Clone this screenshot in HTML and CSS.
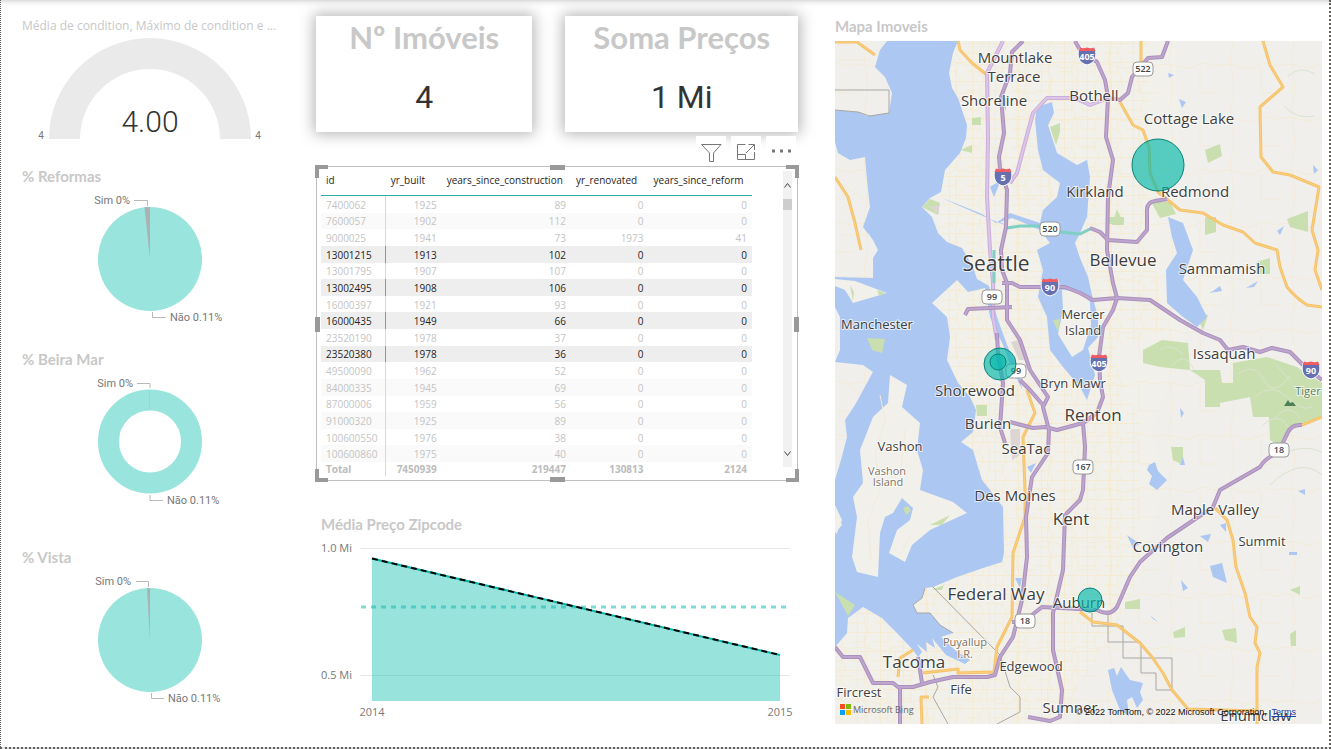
FILE: index.html
```html
<!DOCTYPE html>
<html lang="pt">
<head>
<meta charset="utf-8">
<meta name="viewport" content="width=device-width, initial-scale=1">
<title>Imóveis</title>
<link rel="stylesheet" href="styles.css">
</head>
<body>
<main class="report">
  <div class="column indicators">
    <section class="visual gauge">
      <h2 class="title title-plain">Média de condition, Máximo de condition e ...</h2>
      <svg class="chart" viewBox="22 36 257 130" role="img" aria-label="4.00">
        <path class="gauge-arc" d="M49 139A101 101 0 0 1 251 139H220A70 70 0 0 0 80 139Z"/>
        <text class="gauge-value" x="150" y="132">4.00</text>
        <text class="gauge-limit" x="41" y="139">4</text>
        <text class="gauge-limit" x="258" y="139">4</text>
      </svg>
    </section>
    <section class="visual">
      <h2 class="title">% Reformas</h2>
      <svg class="chart" viewBox="22 186 257 163" role="img" aria-label="Reformas">
        <circle class="slice-no" cx="150" cy="259" r="52"/>
        <path class="slice-yes" d="M150 259L144.500 207.300Q147 207 150 207Z"/>
        <path class="leader" d="M134 200.500H147.500V206M152.500 312V317.500H166"/>
        <text class="pie-label end" x="130" y="204">Sim 0%</text>
        <text class="pie-label" x="170" y="321">Não 0.11%</text>
      </svg>
    </section>
    <section class="visual">
      <h2 class="title">% Beira Mar</h2>
      <svg class="chart" viewBox="22 369 257 178" role="img" aria-label="Beira Mar">
        <circle class="ring" cx="150" cy="441.500" r="41.500"/>
        <path class="leader thin" d="M149.500 390V410"/>
        <path class="leader" d="M137 383.500H150V388M150 495V500.500H163"/>
        <text class="pie-label end" x="133" y="387">Sim 0%</text>
        <text class="pie-label" x="167" y="504">Não 0.11%</text>
      </svg>
    </section>
    <section class="visual">
      <h2 class="title">% Vista</h2>
      <svg class="chart" viewBox="22 567 257 163" role="img" aria-label="Vista">
        <circle class="slice-no" cx="150" cy="640" r="52"/>
        <path class="slice-yes" d="M150 640L147 588.100L150 588Z"/>
        <path class="leader" d="M136 581.500H148.500V587M151.500 693V698.500H164"/>
        <text class="pie-label end" x="131" y="585">Sim 0%</text>
        <text class="pie-label" x="168" y="702">Não 0.11%</text>
      </svg>
    </section>
  </div>

  <div class="column details">
    <div class="cards">
      <section class="card"><h2 class="card-title">Nº Imóveis</h2><p class="card-value">4</p></section>
      <section class="card"><h2 class="card-title">Soma Preços</h2><p class="card-value">1 Mi</p></section>
    </div>
    <div class="toolbar">
      <button class="tool" type="button" aria-label="Filtros"><svg viewBox="0 0 30 30"><path d="M5.500 8.500H25L17.500 17V25.500H13.500V17Z"/></svg></button>
      <button class="tool" type="button" aria-label="Modo de foco"><svg viewBox="0 0 30 30"><path d="M14.500 8.500H6.500V23.500H23.500V16M6.500 18.500H14.500V23.500M15 17L23 9M17.500 8.500H23.500V14"/></svg></button>
      <button class="tool" type="button" aria-label="Mais opções"><svg viewBox="0 0 30 30"><path class="dots" d="M6 13.500h3v3h-3zM14 13.500h3v3h-3zM22 13.500h3v3h-3z"/></svg></button>
    </div>
    <section class="table-frame">
      <i class="grip corner nw"></i><i class="grip corner ne"></i><i class="grip corner sw"></i><i class="grip corner se"></i>
      <i class="grip flat n"></i><i class="grip flat s"></i><i class="grip tall w"></i><i class="grip tall e"></i>
      <table class="data">
        <colgroup><col class="c-id"><col class="c-built"><col class="c-age"><col class="c-renovated"><col class="c-reform"></colgroup>
        <thead><tr><th>id</th><th>yr_built</th><th>years_since_construction</th><th>yr_renovated</th><th>years_since_reform</th></tr></thead>
        <tbody>
          <tr><td>7400062</td><td>1925</td><td>89</td><td>0</td><td>0</td></tr>
          <tr><td>7600057</td><td>1902</td><td>112</td><td>0</td><td>0</td></tr>
          <tr><td>9000025</td><td>1941</td><td>73</td><td>1973</td><td>41</td></tr>
          <tr class="selected"><td>13001215</td><td>1913</td><td>102</td><td>0</td><td>0</td></tr>
          <tr><td>13001795</td><td>1907</td><td>107</td><td>0</td><td>0</td></tr>
          <tr class="selected"><td>13002495</td><td>1908</td><td>106</td><td>0</td><td>0</td></tr>
          <tr><td>16000397</td><td>1921</td><td>93</td><td>0</td><td>0</td></tr>
          <tr class="selected"><td>16000435</td><td>1949</td><td>66</td><td>0</td><td>0</td></tr>
          <tr><td>23520190</td><td>1978</td><td>37</td><td>0</td><td>0</td></tr>
          <tr class="selected"><td>23520380</td><td>1978</td><td>36</td><td>0</td><td>0</td></tr>
          <tr><td>49500090</td><td>1962</td><td>52</td><td>0</td><td>0</td></tr>
          <tr><td>84000335</td><td>1945</td><td>69</td><td>0</td><td>0</td></tr>
          <tr><td>87000006</td><td>1959</td><td>56</td><td>0</td><td>0</td></tr>
          <tr><td>91000320</td><td>1925</td><td>89</td><td>0</td><td>0</td></tr>
          <tr><td>100600550</td><td>1976</td><td>38</td><td>0</td><td>0</td></tr>
          <tr><td>100600860</td><td>1975</td><td>40</td><td>0</td><td>0</td></tr>
        </tbody>
        <tfoot><tr><td>Total</td><td>7450939</td><td>219447</td><td>130813</td><td>2124</td></tr></tfoot>
      </table>
      <div class="scroll">
        <button class="scroll-arrow" type="button" aria-label="Subir"><svg viewBox="0 0 9 9"><path d="M1.500 6.500L4.500 2.500L7.500 6.500"/></svg></button>
        <span class="thumb"></span>
        <button class="scroll-arrow last" type="button" aria-label="Descer"><svg viewBox="0 0 9 9"><path d="M1.500 2.500L4.500 6.500L7.500 2.500"/></svg></button>
      </div>
    </section>
    <section class="visual trend">
      <h2 class="title">Média Preço Zipcode</h2>
      <svg class="chart" viewBox="316 534 482 190" role="img" aria-label="Média Preço Zipcode">
        <path class="gridline" d="M361 548.500H790M361 675.500H790"/>
        <path class="area" d="M372 558.500L780 655V701H372Z"/>
        <path class="average" d="M361 607H790"/>
        <path class="series" d="M372 558.500L780 655"/>
        <path class="trend-line" d="M372 558.500L780 655"/>
        <text class="axis" x="321" y="552">1.0 Mi</text>
        <text class="axis" x="321" y="679">0.5 Mi</text>
        <text class="axis mid" x="372" y="716">2014</text>
        <text class="axis mid" x="780" y="716">2015</text>
      </svg>
    </section>
  </div>

  <section class="column map-visual">
    <h2 class="title">Mapa Imoveis</h2>
    <div class="map">
      <svg class="map-canvas" viewBox="835 41 487 683" preserveAspectRatio="xMidYMid slice" role="img" aria-label="Mapa Imoveis">
        <defs>
          <pattern id="streets" width="23" height="19" patternUnits="userSpaceOnUse"><path class="street" d="M0 5.500H23M0 15H14M6.500 0V19M17 0V8M14 8V19"/></pattern>
          <pattern id="lanes" width="61" height="53" patternUnits="userSpaceOnUse"><path class="lane" d="M0 12C17 8 25 20 36 13S52 16 61 12M11 0C8 10 18 32 11 53M41 15V40H61"/></pattern>
          <g id="shield"><path class="shield-body" d="M-8 -7C-10 -1 -9 7 0 9C9 7 10 -1 8 -7Z"/><path class="shield-top" d="M-8.500 -5L-7 -8.500Q-4 -7 0 -8.500Q4 -7 7 -8.500L8.500 -5Z"/></g>
          <g id="sign"><rect class="sign" x="-10" y="-7" width="20" height="14" rx="4"/></g>
          <g id="freeways">
            <path d="M1023 41L1012 52L1010 73L1001 97L1004 133L999 157L1000 168L1007 190L1006 227L1001 250L1002 270L1007 283V320L1020 340L1030 370L1048 397L1043 407L1049 430L1048 453L1032 477L1030 490L1026 517L1027 557L1022 600L1013 637L1000 657L995 675L987 677H953L930 682L913 687H898L893 683H873L860 657H843L835 647M900 687V724M918 657L922 683"/>
            <path d="M1075 41L1080 50L1097 62L1105 80L1108 97L1106 137L1113 160L1108 197L1107 250L1113 283L1117 298L1113 310L1103 327L1099 357L1100 380L1103 397L1097 413L1083 423L1057 430L1045 427L1033 428L1010 422"/>
            <path d="M1083 423L1085 447L1083 490L1080 500L1065 515L1063 570L1053 613V650L1062 690L1060 717L1050 721L1028 717"/>
            <path d="M1002 283H1012L1020 287H1065L1080 293L1093 300L1117 298L1150 300L1180 320L1203 333L1220 340L1228 350L1243 347L1260 352L1272 348L1290 352L1303 365L1322 380"/>
            <path d="M1090 228L1100 232L1108 240L1137 242L1147 230V210Q1147 202 1155 201L1167 199"/>
            <path d="M1302 425Q1292 424 1288 432L1278 453Q1265 458 1260 467L1220 490L1213 507L1167 538L1140 562L1130 577L1117 607Q1110 617 1097 610L1042 607L1023 622H1012"/>
            <path d="M1168 41L1162 57L1148 58L1132 77L1128 93L1120 100L1108 98M965 315L968 309L1012 307M1020 380L1030 390L1043 405M997 333L998 355L1003 383L1000 427L1005 443"/>
          </g>
          <g id="parkways"><path d="M1003 41L987 73L988 137L987 197L990 250L993 283V317L997 340M1108 98L1090 105L1075 98H1047L1033 113L1023 150L1017 173L1010 183"/></g>
          <g id="highways">
            <path d="M835 42H857L875 55M958 41L960 50L972 63L987 75M835 177L848 197L855 223L861 250M1141 41V64M1120 102L1133 125L1143 130L1149 147L1150 173L1158 192L1180 210L1203 213L1223 225L1243 232L1255 243L1277 250L1280 267L1287 287Q1296 298 1307 305L1322 307"/>
            <path d="M1263 41L1270 65L1283 87L1260 107L1261 157L1273 172L1290 175L1319 187L1312 230L1318 250L1315 270L1322 290M1302 425L1322 417"/>
            <path d="M1027 390L1035 413L1023 437L1025 490V517L1013 553L1012 617L997 647L994 672L958 673V669L923 673M898 677L900 658L913 650M922 724L921 697H929"/>
            <path d="M1215 508L1227 520L1233 540L1236 567L1245 593L1250 617L1257 627L1255 643L1260 653L1257 667V724M1080 612L1093 622L1117 625L1140 643L1152 657L1163 673L1172 690L1188 709L1257 711"/>
          </g>
        </defs>
        <rect class="land" x="835" y="41" width="487" height="683"/>
        <path class="town" d="M940 41H1175L1180 200L1230 290L1190 330L1150 430L1165 480L1135 590L1100 650L1050 724H835V600L940 570Z"/>
        <rect class="net" x="835" y="41" width="487" height="683"/>
        <path class="streets" d="M940 41H1150V230L1165 330L1110 350L1140 420V580L1060 724H835V600L940 570Z"/>
        <path class="park" d="M1143 350L1162 340L1188 343L1190 370H1220L1222 383H1233V363L1267 357L1297 367L1322 383V417L1290 427L1282 447L1270 440L1269 417H1253L1250 397L1220 403V407H1205V380L1190 370L1160 367L1143 363ZM1117 209L1124 225H1112ZM1205 150L1220 144L1222 156L1208 163ZM1287 219L1308 211V232L1290 227ZM1150 200L1170 202L1176 214L1160 218ZM1222 630L1236 628L1237 643L1225 640ZM1173 632L1185 627V637L1174 638ZM1205 217H1216V232L1205 235ZM1290 590L1300 586V595ZM1195 312L1208 315L1203 330ZM1171 447H1183V465L1173 460ZM1256 262L1270 258V274H1256ZM1108 217H1124V224H1108ZM972 118L981 117V125H972ZM960 150L972 145V153ZM1050 127L1060 123V132L1056 145ZM1125 602L1140 599V609H1125ZM1290 634L1296 630V646H1291ZM976 405H987V416H977Z"/>
        <path class="hills" d="M1238 374Q1255 362 1264 380T1290 376M1255 397Q1272 382 1287 397T1312 407M1275 419Q1288 401 1300 418M1276 365L1290 380M1160 350Q1170 342 1183 354M1172 366Q1185 350 1194 370M1288 76Q1300 65 1315 74M1284 106Q1297 120 1315 116M1263 425Q1280 410 1290 430M1270 485Q1300 456 1322 475M1281 455Q1303 443 1322 452"/>
        <path class="airport" d="M1010 429H1020V455L1012 460ZM1011 342L1018 340L1028 360H1019Z"/>
        <path class="water" d="M887 41L880 50L875 67L885 77L892 93L889 113L867 116L858 112L835 110V142L838 153L850 160L865 157L867 180L870 207L863 227L873 240L878 250L873 258V278L835 277V307L840 317V350L835 362L863 365L873 372L855 405L845 420L847 437L841 460L835 480V510L842 525L835 533V647L847 633L848 618L863 607L882 618L897 633L913 650L918 657L922 652L917 644L927 652L926 642L935 648L932 638L946 655L965 664L970 660L955 650L941 637L953 633L940 625L930 613H917L913 605L922 598L925 588L933 587L957 577L983 568L1002 562L1004 553L1003 507L990 490L982 480L978 467L973 450L961 442L973 432L976 410L970 397L958 383L947 360L950 337L947 317L932 303L957 280L968 292L985 288L990 317L1003 345L1011 367L1022 389L1018 369L1007 345L997 317L989 286L977 279L973 267L962 248L947 242L938 233L932 217L922 207L930 198L941 192L945 170L960 153L966 138L967 125L958 98L952 88L949 73L953 53L958 41Z"/>
        <path class="water" d="M1037 107L1052 102L1054 113L1048 125L1057 153L1077 165L1087 160L1090 177L1088 203L1087 217L1080 233L1075 243L1080 258L1088 277L1092 295L1098 317V337L1088 348L1095 375L1087 400L1080 387L1063 367L1050 350L1047 317L1038 297L1043 270L1037 250L1050 243L1040 230L1022 222L1012 218L1000 222L1012 228L990 219L962 207L942 198L955 203L982 214L996 223L1010 213L1040 223L1043 210L1057 197L1060 183L1043 170L1038 150L1035 120ZM1168 217L1183 223L1193 250L1183 280L1197 297L1207 317L1197 327L1183 317L1167 303L1166 270L1177 253L1172 237ZM1108 670L1114 668L1117 676L1121 667L1130 680L1143 683L1140 692L1143 700L1137 708L1132 697L1127 700L1129 716L1120 710L1112 690ZM1149 465L1155 462L1158 471L1167 480L1157 490L1149 484L1152 476L1147 470ZM1210 566L1222 563L1227 583L1213 577ZM1127 535L1140 544L1133 548ZM1179 99L1186 102L1182 108ZM1168 73L1174 75L1169 78ZM1181 580L1188 588L1183 591ZM1213 291L1220 286L1222 291L1209 293ZM1246 288L1258 281L1254 287ZM1277 231L1284 226L1280 235ZM1313 165L1318 170L1314 174ZM1200 536L1211 534L1208 542ZM1180 408L1184 413L1181 418ZM1289 552H1297V555H1289ZM1150 615L1158 622L1153 619ZM1220 525L1226 523V532ZM1298 491L1305 489L1305 495ZM1015 578H1022L1020 588ZM1027 467L1036 463L1031 473ZM990 187L1001 180L994 197ZM1000 98H1006V111ZM1183 457L1185 465H1180Z"/>
        <path class="island" d="M890 375L907 385L902 407L920 423L917 450L923 470L920 490L953 502L967 513L930 530L912 545L905 562L889 553L897 530L910 520L913 508L902 498L893 513L885 517L880 533L878 577L857 572L852 557L857 517L853 497L863 483L860 450L873 417L888 403ZM835 279L855 281L887 293L853 303L845 290L835 286ZM1062 290L1078 291L1090 302L1091 325L1083 350L1072 357L1058 334L1063 310ZM835 505L842 520L836 535Z"/>
        <path class="park" d="M867 338L885 339L882 353L872 350ZM835 592L855 605L848 616ZM930 525L950 515L942 525ZM922 207L930 199L940 203L938 215ZM877 290L886 293L879 296ZM1053 320L1060 319L1058 332ZM850 285L854 292L853 301ZM932 590L944 585L942 590ZM903 508L908 506L911 511L906 515Z"/>
        <path class="airport" d="M929 207L939 205V214Z"/>
        <path class="lane" d="M880 395L885 420L875 455L880 490L868 520L871 560M905 430L900 480M910 535L900 555M845 380L860 395M840 60H870M843 185L865 200M840 235L870 235"/>
        <path class="boundary" d="M835 90H889V113L870 116L858 112L835 110M933 587L1000 655L1010 687L1020 697V712L997 724M933 675L938 687L933 697L948 724M925 588L922 598L913 605L917 613H930L940 625L953 633M1092 613V626H1123V658H1172V690H1156V673H1141V642H1108V613"/>
        <g class="highway-edge"><use href="#highways"/></g><g class="highway"><use href="#highways"/></g>
        <g class="parkway-edge"><use href="#parkways"/></g><g class="parkway"><use href="#parkways"/></g>
        <path class="bridge" d="M1007 228L1020 226H1047L1060 232L1080 234L1092 228M994 250V283"/>
        <g class="freeway-edge"><use href="#freeways"/></g><g class="freeway"><use href="#freeways"/></g>
        <path class="peak" d="M1284 406L1288 400L1290 403L1293 402L1296 406Z"/>

        <use href="#shield" x="1087" y="56"/><use href="#shield" x="1003" y="177"/><use href="#shield" x="1050" y="287"/><use href="#shield" x="1099" y="363"/><use href="#shield" x="1311" y="370"/>
        <use href="#sign" x="1143" y="69"/><use href="#sign" x="1050" y="229"/><use href="#sign" x="992" y="297"/><use href="#sign" x="1016" y="371"/><use href="#sign" x="1083" y="467"/><use href="#sign" x="1279" y="450"/><use href="#sign" x="1025" y="621"/>
        <g class="shield-text"><text x="1087" y="60">405</text><text x="1003" y="181">5</text><text x="1050" y="291">90</text><text x="1099" y="367">405</text><text x="1311" y="374">90</text></g>
        <g class="sign-text"><text x="1143" y="72">522</text><text x="1050" y="232">520</text><text x="992" y="300">99</text><text x="1016" y="374">99</text><text x="1083" y="470">167</text><text x="1279" y="453">18</text><text x="1025" y="624">18</text></g>

        <g class="place p11"><text class="isle" x="887" y="475">Vashon</text><text class="isle" x="888" y="486">Island</text><text class="isle" x="965" y="646">Puyallup</text><text class="isle" x="965" y="658">I.R.</text><text class="forest" x="1308" y="395">Tiger</text></g>
        <g class="place p12"><text x="877" y="329">Manchester</text><text x="1083" y="319">Mercer</text><text x="1083" y="335">Island</text><text x="1073" y="388">Bryn Mawr</text><text x="900" y="451">Vashon</text><text x="1262" y="546">Summit</text><text x="1031" y="671">Edgewood</text><text x="859" y="697">Fircrest</text><text x="961" y="694">Fife</text></g>
        <g class="place p14"><text x="1015" y="63">Mountlake</text><text x="1014" y="82">Terrace</text><text x="994" y="106">Shoreline</text><text x="1094" y="101">Bothell</text><text x="1189" y="124">Cottage Lake</text><text x="1195" y="197">Redmond</text><text x="1095" y="197">Kirkland</text><text x="1222" y="274">Sammamish</text><text x="1224" y="359">Issaquah</text><text x="975" y="396">Shorewood</text><text x="988" y="429">Burien</text><text x="1026" y="454">SeaTac</text><text x="1015" y="501">Des Moines</text><text x="1215" y="515">Maple Valley</text><text x="1168" y="552">Covington</text><text x="1079" y="608">Auburn</text><text x="1070" y="713">Sumner</text><text x="1256" y="721">Enumclaw</text></g>
        <g class="place p16"><text x="1123" y="266">Bellevue</text><text x="1093" y="421">Renton</text><text x="1071" y="525">Kent</text><text x="996" y="600">Federal Way</text><text x="914" y="668">Tacoma</text></g>
        <g class="place p20"><text x="996" y="271">Seattle</text></g>

        <g class="bubble"><circle cx="1158" cy="165" r="26"/><circle cx="1000" cy="364" r="16"/><circle cx="998" cy="362" r="8"/><circle cx="1090" cy="600" r="12"/></g>
      </svg>
      <div class="brand"><svg class="brand-mark" viewBox="0 0 11 11"><path fill="#f25022" d="M0 0h5v5H0z"/><path fill="#7fba00" d="M6 0h5v5H6z"/><path fill="#00a4ef" d="M0 6h5v5H0z"/><path fill="#ffb900" d="M6 6h5v5H6z"/></svg>Microsoft Bing</div>
      <div class="credits">© 2022 TomTom, © 2022 Microsoft Corporation,  <a href="#terms">Terms</a></div>
    </div>
  </section>
</main>
</body>
</html>
```
FILE: styles.css
```css
* { box-sizing: border-box; }
body { margin: 0; background: #fff; color: #252423; font-family: "Open Sans", "Noto Sans", sans-serif; }
h2, p { margin: 0; }
button { padding: 0; border: 0; background: none; font: inherit; }

.report {
  display: grid;
  grid-template-columns: 257fr 482fr 487fr;
  gap: 37px;
  min-height: 100vh;
  padding: 16px 7px 0 21px;
  border: 2px dotted #605e5c;
  border-width: 0 2px 2px 1px;
  background: linear-gradient(#dcdcdc, #f4f4f4 3px, #fff 7px);
}
.column { display: flex; flex-direction: column; min-width: 0; }
.title { color: #c8c8c8; font: 700 15px/20px Lato, sans-serif; white-space: nowrap; }
.title-plain { font: 400 12px/20px "Open Sans", sans-serif; }
.chart { display: block; width: 100%; }

.gauge-arc { fill: #eaeaea; }
.gauge-value { fill: #333; font: 300 30px Roboto, sans-serif; text-anchor: middle; }
.gauge-limit { fill: #777; font: 10px Roboto, sans-serif; text-anchor: middle; }
.slice-no { fill: #99e4dc; }
.slice-yes { fill: #abb2b4; }
.ring { fill: none; stroke: #99e4dc; stroke-width: 21px; }
.leader { fill: none; stroke: #b8b8b8; }
.leader.thin { stroke: #a6cfcd; }
.pie-label { fill: #777; font: 11px Roboto, sans-serif; }
.end { text-anchor: end; }
.mid { text-anchor: middle; }

.cards { display: grid; grid-template-columns: 216fr 232fr; gap: 33px; }
.card { height: 116px; padding-top: 3px; background: #fff; box-shadow: 0 0 14px 2px rgba(0, 0, 0, .3); text-align: center; }
.card-title { color: #c8c8c8; font: 700 31px/36px Lato, sans-serif; }
.card-value { margin-top: 22px; color: #333; font: 400 32px/40px Roboto, sans-serif; }

.toolbar { position: relative; display: flex; justify-content: flex-end; gap: 5px; height: 30px; margin-top: 4px; padding-right: 2px; }
.tool { width: 30px; background: #fff; }
.tool svg { display: block; width: 30px; height: 30px; fill: none; stroke: #777; }
.tool .dots { fill: #777; stroke: none; }

.table-frame { position: relative; display: flex; padding: 4px 5px 4px 4px; border: 1px solid #c0c0c0; }
.grip { position: absolute; border: 0 solid #999; }
.corner { width: 13px; height: 13px; }
.flat { left: 50%; width: 15px; height: 5px; margin-left: -7px; background: #999; }
.tall { top: 50%; width: 5px; height: 15px; margin-top: -7px; background: #999; }
.nw { top: -2px; left: -2px; border-width: 4px 0 0 4px; }
.ne { top: -2px; right: -2px; border-width: 4px 4px 0 0; }
.sw { bottom: -2px; left: -2px; border-width: 0 0 4px 4px; }
.se { bottom: -2px; right: -2px; border-width: 0 4px 4px 0; }
.n { top: -2px; }
.s { bottom: -2px; }
.w { left: -2px; }
.e { right: -2px; }

.data { flex: 1; height: 305px; border-collapse: separate; border-spacing: 0; table-layout: fixed; font-size: 10px; line-height: 14px; }
.c-id { width: 15%; }
.c-built { width: 13%; }
.c-age { width: 30%; }
.c-renovated { width: 18%; }
.c-reform { width: 24%; }
.data th { height: 25px; padding: 0 0 6px 5px; border-bottom: 1px solid #2ab0a6; font-weight: 400; text-align: left; white-space: nowrap; }
.data td { padding: 1px 5px 0; color: #c4c4c4; text-align: right; }
.data td:first-child { border-right: 1px solid #b3eae5; text-align: left; }
.data tbody tr:nth-child(even) td { background: #fafafa; }
.data tbody .selected td { color: #252423; }
.data tbody tr.selected td { background: #eee; }
.data .selected td:first-child { border-color: #32c3b8; }
.data tfoot td { height: 14px; padding: 0 5px 1px; color: #bcbcbc; font-weight: 700; line-height: 12px; }
.scroll { display: flex; flex-direction: column; width: 9px; height: 296px; margin-left: 31px; background: #f1f1f1; }
.scroll-arrow { width: 9px; height: 28px; }
.scroll-arrow svg { display: block; width: 9px; height: 9px; margin: auto; fill: none; stroke: #444; }
.scroll-arrow.last { margin-top: auto; }
.thumb { height: 11px; background: #cdcdcd; }

.trend { margin-top: 33px; }
.trend .title { padding-left: 5px; }
.gridline { stroke: #e6e6e6; }
.area { fill: #01b8aa; fill-opacity: .4; }
.average { stroke: #01b8aa; stroke-opacity: .5; stroke-width: 3px; stroke-dasharray: 5 5; }
.series { stroke: #01b8aa; stroke-width: 2px; }
.trend-line { stroke: #000; stroke-width: 2px; stroke-dasharray: 6 4; }
.axis { fill: #777; font: 11px "Open Sans", sans-serif; }

.map { position: relative; flex: 1; max-height: 683px; min-height: 400px; margin-top: 5px; overflow: hidden; }
.map-canvas { position: absolute; inset: 0; width: 100%; height: 100%; }
.land { fill: #f0efec; }
.town { fill: #f2f0ea; }
.net { fill: url(#lanes); }
.streets { fill: url(#streets); }
.street { fill: none; stroke: #f5ebd3; }
.lane { fill: none; stroke: #f3ebd8; }
.water { fill: #abc7f2; }
.island { fill: #f2f0eb; }
.park { fill: #c9dfb0; }
.hills { fill: none; stroke: #dbe3d0; }
.airport { fill: #dcd5d2; }
.boundary { fill: none; stroke: #aaa7a3; }
.freeway-edge, .freeway, .parkway-edge, .parkway, .highway-edge, .highway { fill: none; stroke-linejoin: round; }
.freeway-edge { stroke: #aa90bc; stroke-width: 4px; }
.freeway { stroke: #bda5cd; stroke-width: 2px; }
.parkway-edge { stroke: #c9aeda; stroke-width: 4px; }
.parkway { stroke: #dcc5e8; stroke-width: 2px; }
.highway-edge { stroke: #f5c268; stroke-width: 3px; }
.highway { stroke: #fbd083; stroke-width: 1px; }
.bridge { fill: none; stroke: #7fcfc4; stroke-width: 3px; }
.peak { fill: #4d8055; }
.shield-body { fill: #6670b0; stroke: #fff; }
.shield-top { fill: #ef5d62; }
.sign { fill: #fff; stroke: #999; }
.shield-text { fill: #fff; font: 700 9px "Open Sans", sans-serif; text-anchor: middle; }
.sign-text { fill: #444; font: 600 9px "Open Sans", sans-serif; text-anchor: middle; }
.place { fill: #3d3d3d; stroke: #fff; stroke-opacity: .7; stroke-width: 2px; paint-order: stroke; font-family: "Open Sans", sans-serif; text-anchor: middle; }
.p11 { font-size: 11px; }
.p12 { font-size: 13px; }
.p14 { font-size: 15px; }
.p16 { font-size: 17px; }
.p20 { font-size: 21px; }
.isle { fill: #7c7466; }
.forest { fill: #54805d; }
.bubble { fill: #01b8aa; fill-opacity: .65; stroke: #078377; }
.brand { position: absolute; left: 5px; bottom: 8px; display: flex; align-items: center; gap: 2px; color: #666; font: 9px/13px "Open Sans", sans-serif; }
.brand-mark { width: 11px; height: 11px; }
.credits { position: absolute; right: 26px; bottom: 6px; color: #111; font: 9px/12px "Liberation Sans", sans-serif; white-space: pre; }
.credits a { color: #1a44a8; }
```
